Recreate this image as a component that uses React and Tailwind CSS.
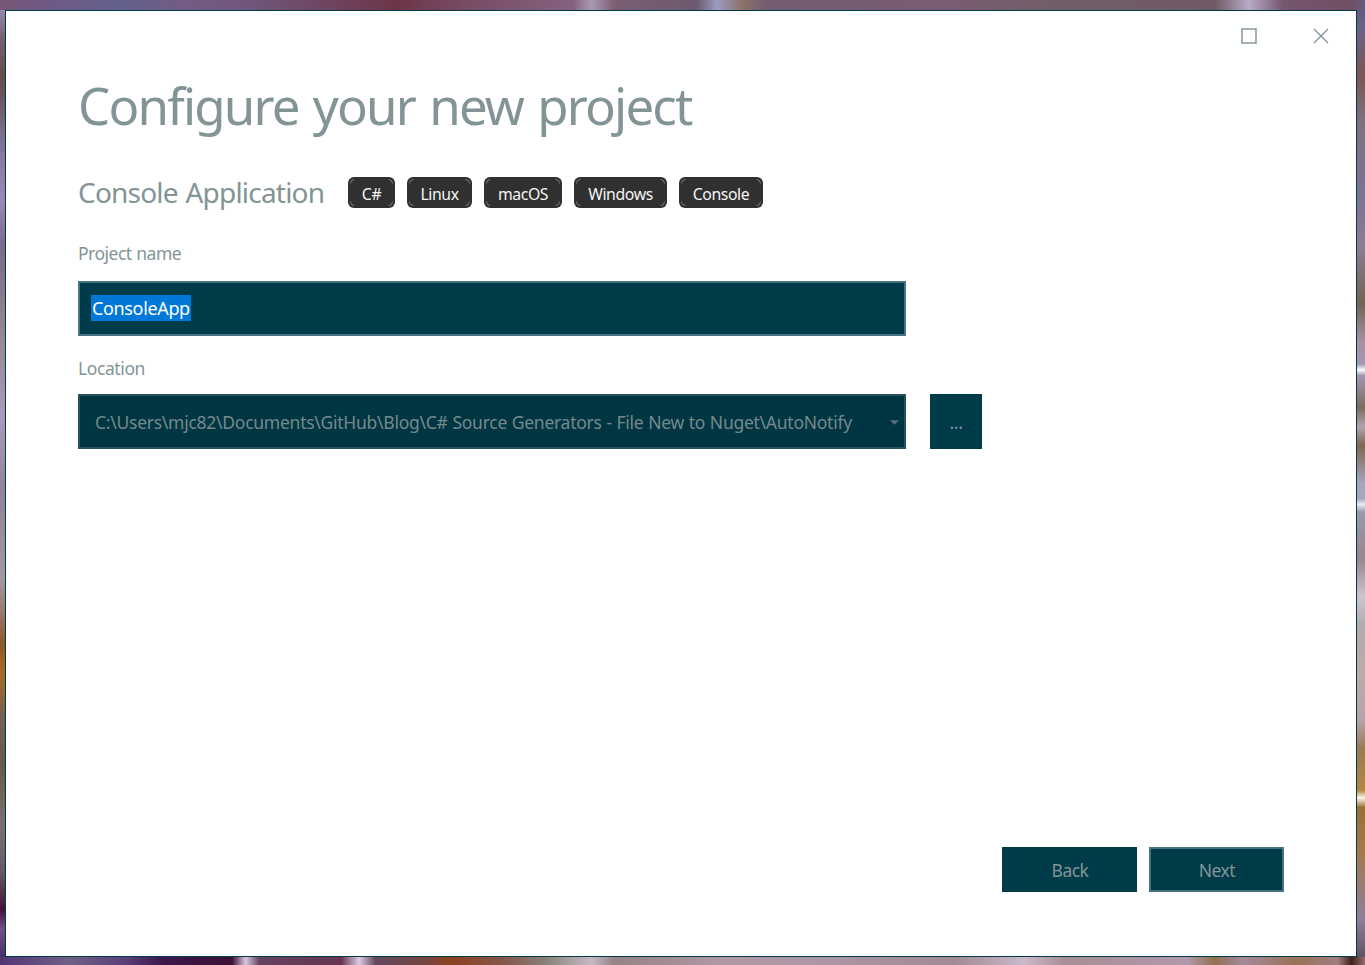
const tags = [
  { name: 'C#', size: 'w-[47px]' },
  { name: 'Linux', size: 'w-[65px]' },
  { name: 'macOS', size: 'w-[78px]' },
  { name: 'Windows', size: 'w-[93px]' },
  { name: 'Console', size: 'w-[84px]' },
];

function Tag({ name, size }) {
  return (
    <span className={`relative flex h-[31px] shrink-0 items-center justify-center rounded-[6px] bg-[#303030] pt-[3px] text-[15.8px] leading-6 tracking-[-0.4px] text-[#f5f5f5] ${size}`}>
      <Corner className="left-px top-px" />
      <Corner className="right-px top-px rotate-90" />
      <Corner className="bottom-px right-px rotate-180" />
      <Corner className="bottom-px left-px -rotate-90" />
      <span>{name}</span>
    </span>
  );
}

function Corner({ className }) {
  return (
    <svg className={`absolute h-[6px] w-[6px] ${className}`} viewBox="0 0 6 6" aria-hidden="true">
      <path d="M1.5 5.5 Q1.5 1.5 5.5 1.5" fill="none" stroke="#777" strokeWidth="1" />
    </svg>
  );
}

function TitleBar() {
  return (
    <div className="flex h-[50px] items-start justify-end gap-[56px] pr-[27px] pt-[17px]">
      <svg className="h-4 w-4" viewBox="0 0 16 16" fill="none" aria-hidden="true">
        <rect x="1" y="1" width="14" height="14" stroke="#7d9295" strokeWidth="1.4" />
      </svg>
      <svg className="h-4 w-4" viewBox="0 0 16 16" fill="none" aria-hidden="true">
        <path d="M1 1L15 15M15 1L1 15" stroke="#7d9295" strokeWidth="1.25" />
      </svg>
    </div>
  );
}

export default function App() {
  return (
    <div className="flex h-[965px] w-[1365px] flex-col overflow-hidden font-['Noto_Sans','Open_Sans',sans-serif] text-[#839496]">
      <div className="h-[10px] shrink-0 bg-[linear-gradient(90deg,#765774_0%,#6d5a88_4%,#64618c_9%,#745b84_14%,#6f5577_19%,#6e3548_29%,#774b64_34%,#86627e_42%,#aa99b4_43.3%,#7b5f72_45%,#6c596f_51%,#9b9bc0_52.5%,#8b7067_54.5%,#745d70_56%,#795c72_69%,#715e68_78%,#6f5964_89%,#b7acc4_91.5%,#74566f_94%,#714e62_99%,#665c7a_100%)]" />
      <div className="flex h-[947px] shrink-0">
        <div className="w-[5px] bg-[linear-gradient(180deg,#9789ae_0%,#765f70_3%,#664c46_7%,#6e5b68_10%,#7d7393_14%,#9b89b8_20%,#776c89_25%,#978992_35%,#aa9bbc_43%,#928197_51%,#a5999f_60%,#977466_64%,#8e5a24_67%,#a76c22_70%,#735f57_75%,#655a48_80%,#7c706f_86%,#645a62_91%,#431137_95%,#715089_97%,#493169_100%)]" />
        <main className="flex w-[1352px] flex-col border border-[#003b49] bg-white">
          <TitleBar />
          <div className="flex flex-1 flex-col px-[72px]">
            <h1 className="mt-[8px] h-[72px] whitespace-nowrap text-[51px] leading-[72px] tracking-[-1.8px] [word-spacing:2.6px]">Configure your new project</h1>
            <div className="mt-[36px] flex h-[31px] items-center">
              <h2 className="w-[270px] whitespace-nowrap text-[28px] leading-[31px] tracking-[-0.8px] [word-spacing:1.3px]">Console Application</h2>
              <div className="flex gap-3">
                {tags.map((t) => <Tag key={t.name} {...t} />)}
              </div>
            </div>
            <label className="mt-[33px] h-6 text-[17.5px] leading-6 tracking-[-0.5px] [word-spacing:0.6px]">Project name</label>
            <div className="mt-[16px] flex h-[55px] w-[828px] items-start border-2 border-[#457382] bg-[#003b49] pl-[11px] pt-[12px]">
              <span className="h-[26px] w-[100px] whitespace-nowrap bg-[#0078d7] pl-px text-[18px] leading-[27px] tracking-[-0.35px] text-white">ConsoleApp</span>
            </div>
            <label className="mt-[20px] h-6 text-[17.5px] leading-6 tracking-[-0.4px]">Location</label>
            <div className="mt-[14px] flex gap-6">
              <div className="flex h-[55px] w-[828px] items-center justify-between border-2 border-[#2a515a] bg-[#003642] pl-[15px] pr-[5px]">
                <span className="whitespace-nowrap pt-px text-[17.5px] tracking-[-0.26px] text-[#74898c] [word-spacing:0.45px]">
                  C:\Users\mjc82\Documents\GitHub\Blog\C# Source Generators - File New to Nuget\AutoNotify
                </span>
                <svg className="mt-[2px] h-[5px] w-[9px]" viewBox="0 0 9 5" aria-hidden="true">
                  <path d="M0 .3H9L4.5 4.8Z" fill="#547178" />
                </svg>
              </div>
              <button className="h-[55px] w-[52px] bg-[#003b49] pt-px text-[17.5px] leading-[52px] tracking-[-0.3px]">...</button>
            </div>
            <div className="mb-[64px] mt-auto flex justify-end gap-3">
              <button className="h-[45px] w-[135px] bg-[#003b49] pl-px pt-px text-[17.5px] tracking-[-0.5px]">Back</button>
              <button className="h-[45px] w-[135px] border-2 border-[#457382] bg-[#003b49] pl-px pt-px text-[17.5px] tracking-[-0.5px]">Next</button>
            </div>
          </div>
        </main>
        <div className="w-[8px] bg-[linear-gradient(180deg,#625b83_0%,#6d6086_2%,#7d5654_7%,#7f7180_12%,#807293_20%,#8d7d92_25%,#756252_31%,#aa8fa2_35%,#a596b1_37.4%,#fff_38%,#a596b1_38.6%,#7e6a5b_42%,#b3a2ab_44%,#826650_46%,#aaa4bc_50%,#aaa4bc_51.6%,#eeebf4_52.2%,#9d98ac_53%,#99858d_58%,#cfc4ce_62%,#b3aaac_65%,#c1aaa9_70%,#b9a1a8_75%,#9a7954_78%,#b48743_82.4%,#fff5e9_83.2%,#997034_84.2%,#a57950_89%,#927d98_96%,#635263_100%)]" />
      </div>
      <div className="h-[8px] shrink-0 bg-[linear-gradient(90deg,#513575_0%,#706086_5%,#5a4279_9%,#3b174d_12%,#3c1034_17%,#d5c8df_18%,#64445f_19%,#663452_25%,#dacce2_26.3%,#63485e_27.5%,#734543_31%,#8b421f_33%,#86574c_37%,#89827a_40%,#c7bac5_43.3%,#958385_45%,#b098a5_53%,#ad96a5_60%,#a28b95_70%,#c9b9ca_75%,#a98e96_78%,#b298ac_87%,#92704e_89%,#a5899a_91%,#9a7258_95%,#a17e80_98%,#3e211b_99%,#976b6c_100%)]" />
    </div>
  );
}
